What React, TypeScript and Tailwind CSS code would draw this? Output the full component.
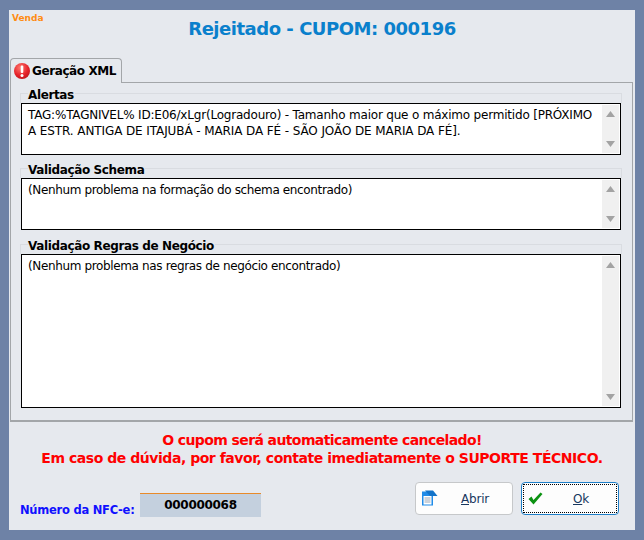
import React from "react";

const font = { fontFamily: '"DejaVu Sans", sans-serif' };

function Arrow({ up }: { up?: boolean }) {
  return (
    <svg width="9" height="6" viewBox="0 0 9 6">
      <path d={up ? "M4.5 0L9 6H0Z" : "M0 0H9L4.5 6Z"} fill="#a3a3a3" />
    </svg>
  );
}

function Group({ title, h, children, extra }: { title: string; h: string; children: React.ReactNode; extra?: string }) {
  return (
    <div className={`flex flex-col ${extra ?? ""}`}>
      <div className="h-[10px] border-t border-l border-r border-[#d9dce1] relative">
        <span className="absolute left-[7px] top-[-6px] text-[12px] leading-[14px] font-bold tracking-[-0.37px] text-black bg-[#e6e9ee] pr-[1px]">{title}</span>
      </div>
      <div className={`${h} mx-[1px] border border-black bg-white flex`}>
        <div className="flex-1 pl-[6px] pr-[4px] pt-[3px] text-[12px] leading-[16px] text-black">{children}</div>
        <div className="w-[17px] mr-[1px] my-[1px] bg-[#f0f0f0] flex flex-col justify-between items-center pt-[6px] pb-[6px] shrink-0">
          <Arrow up />
          <Arrow />
        </div>
      </div>
    </div>
  );
}

export default function App() {
  return (
    <div className="w-[644px] h-[540px] bg-[#6e82a6] pl-[9px] pr-[9px] py-[10px]" style={font}>
      <div className="h-[520px] bg-[#e6e9ee] flex flex-col relative">
        <div className="absolute left-[3px] top-[2px] text-[9px] leading-[12px] font-bold text-[#ff8c12]">Venda</div>
        <div className="h-[48px] pt-[7px] text-center text-[18px] leading-[24px] font-bold tracking-[-0.48px] text-[#0a80cc]">Rejeitado - CUPOM: 000196</div>
        <div className="h-[24px] flex items-end">
          <div className="ml-[1px] w-[112px] h-[25px] -mb-[1px] z-10 bg-[#e6e9ee] border border-b-0 border-[#a3a6a9] rounded-t-[4px] flex items-center pl-[3px] gap-[2px]">
            <svg width="16" height="16" viewBox="0 0 16 16" className="shrink-0">
              <defs>
                <radialGradient id="err" cx="0.4" cy="0.3" r="0.8">
                  <stop offset="0" stopColor="#ff7a70" />
                  <stop offset="0.6" stopColor="#e5222a" />
                  <stop offset="1" stopColor="#b81218" />
                </radialGradient>
              </defs>
              <circle cx="8" cy="8" r="8" fill="url(#err)" />
              <rect x="6.7" y="2.5" width="2.6" height="7.5" rx="1" fill="#fff" />
              <circle cx="8" cy="12.5" r="1.5" fill="#fff" />
            </svg>
            <span className="text-[12px] leading-[16px] font-bold tracking-[-0.4px] whitespace-nowrap text-black">Geração XML</span>
          </div>
        </div>
        <div className="ml-[1px] mr-[2px] h-[340px] border border-[#a3a6a9] border-b-2 pl-[9px] pr-[10px] pt-[10px] flex flex-col gap-[13px]">
          <Group title="Alertas" h="h-[52px]">
            <span className="block whitespace-nowrap tracking-[-0.2px]">TAG:%TAGNIVEL% ID:E06/xLgr(Logradouro) - Tamanho maior que o máximo permitido [PRÓXIMO</span>
            <span className="block whitespace-nowrap tracking-[-0.1px]">A ESTR. ANTIGA DE ITAJUBÁ - MARIA DA FÉ - SÃO JOÃO DE MARIA DA FÉ].</span>
          </Group>
          <Group title="Validação Schema" h="h-[52px]">
            <span className="tracking-[-0.36px]">(Nenhum problema na formação do schema encontrado)</span>
          </Group>
          <Group title="Validação Regras de Negócio" h="h-[154px]" extra="mt-[1px]">
            <span className="tracking-[-0.36px]">(Nenhum problema nas regras de negócio encontrado)</span>
          </Group>
        </div>
        <div className="pt-[9px] text-center text-[14px] leading-[18px] font-bold tracking-[-0.46px] text-[#ff0000]">
          <div className="tracking-[-0.6px]">O cupom será automaticamente cancelado!</div>
          <div>Em caso de dúvida, por favor, contate imediatamente o SUPORTE TÉCNICO.</div>
        </div>
        <div className="flex items-start mt-[15px] pl-[11px]">
          <div className="w-[120px] pt-[20px] text-[11.5px] leading-[16px] font-bold tracking-[-0.25px] text-[#1010ff]">Número da NFC-e:</div>
          <div className="mt-[11px] w-[121px] h-[24px] bg-[#c4d0de] border-t border-[#e88a2a] text-center text-[12px] leading-[23px] font-bold tracking-[-0.3px] text-black">000000068</div>
          <div className="ml-[154px] w-[98px] h-[33px] bg-[#fdfdfd] border border-[#c6c8ca] rounded-[4px] flex items-center pl-[5px] text-[#17375e] text-[12px] tracking-[-0.2px]">
            <svg width="17" height="17" viewBox="0 0 17 17">
              <rect x="1" y="1.5" width="11" height="14" fill="#1f8be8" />
              <rect x="2.5" y="6" width="8" height="8.5" fill="#fff" />
              <path d="M3.5 8H9.5M3.5 10H9.5M3.5 12H9.5" stroke="#9aa6b5" />
              <path d="M4 0.5H12L16.5 6H9Z" fill="#1273c9" />
            </svg>
            <span className="ml-[23px]"><span className="underline">A</span>brir</span>
          </div>
          <div className="ml-[8px] w-[98px] h-[33px] bg-[#fdfdfd] border border-[#1f7fc8] rounded-[4px] p-[1px]">
            <div className="h-full border border-dotted border-black flex items-center pl-[4px] text-[#17375e] text-[12px] tracking-[-0.2px]">
              <svg width="15" height="13" viewBox="0 0 15 13">
                <path d="M0.5 7L3.5 4.5L5.5 8L12.5 0.5L14.5 2L5.5 12.5Z" fill="#0c9212" />
              </svg>
              <span className="ml-[30px]"><span className="underline">O</span>k</span>
            </div>
          </div>
        </div>
      </div>
    </div>
  );
}
